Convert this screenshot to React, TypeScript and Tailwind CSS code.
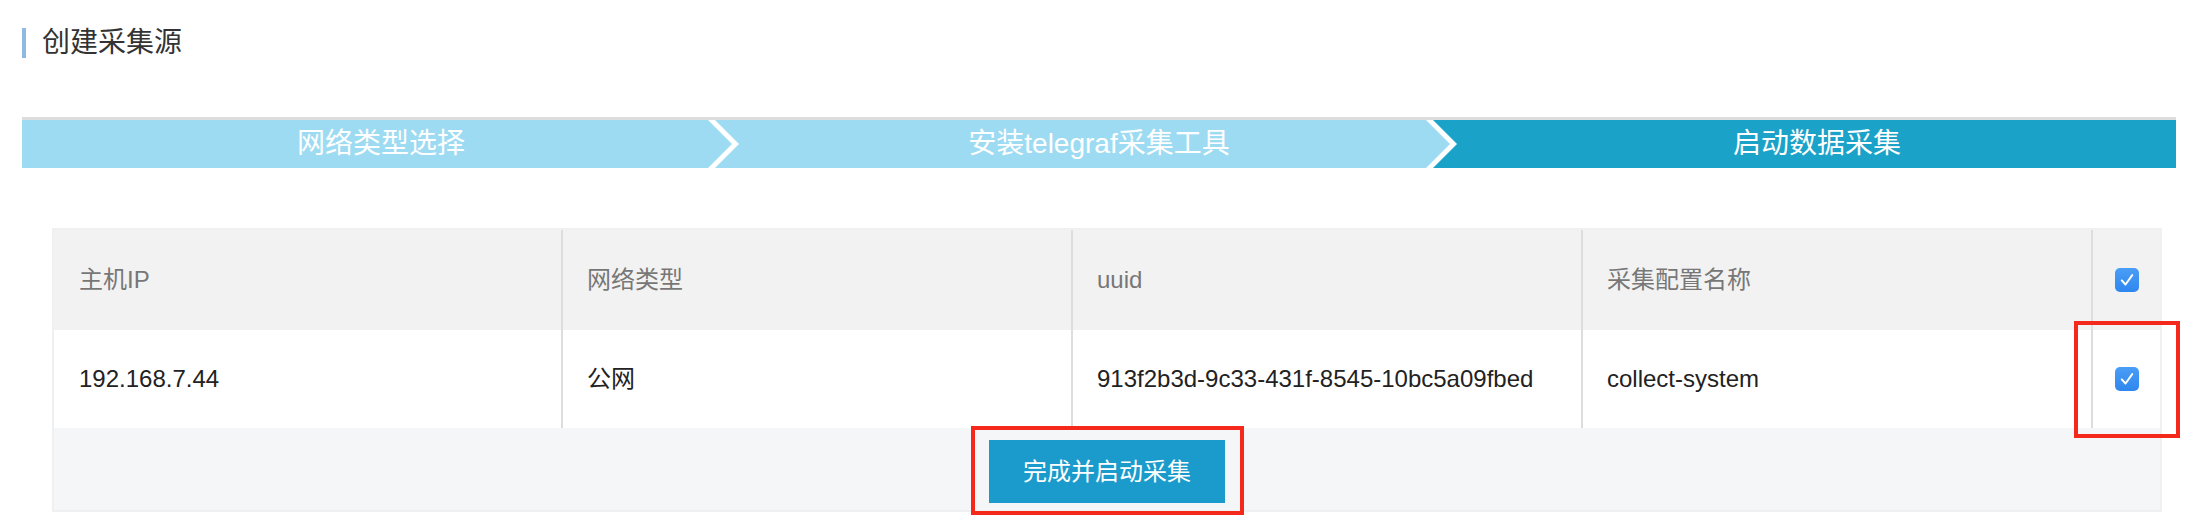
import React from 'react';

const LIGHT = '#9ddbf2';
const DARK = '#1aa2c8';

const steps = [
    { label: '网络类型选择', color: LIGHT },
    { label: '安装telegraf采集工具', color: LIGHT },
    { label: '启动数据采集', color: DARK },
];

function Chevron({ prev, next }: { prev: string; next: string }) {
    return (
        <svg
            className="absolute top-0 left-[-32px] h-[48px] w-[32px]"
            viewBox="0 0 32 48"
            preserveAspectRatio="none">
            <rect width="32" height="48" fill={next} />
            <polygon points="0,0 7,0 31,24 7,48 0,48" fill="#ffffff" />
            <polygon points="0,0 24,24 0,48" fill={prev} />
        </svg>
    );
}

function Checkbox() {
    return (
        <div className="flex h-[24px] w-[24px] items-center justify-center rounded-[5px] bg-gradient-to-b from-[#4a9ef6] to-[#2f86ee]">
            <svg viewBox="0 0 24 24" className="h-[18px] w-[18px]">
                <path
                    d="M5 12.5 L10 18 L19 5.5"
                    fill="none"
                    stroke="#ffffff"
                    strokeWidth="2.6"
                    strokeLinecap="round"
                    strokeLinejoin="round"
                />
            </svg>
        </div>
    );
}

export default function App() {
    const font = "font-['Liberation_Sans','Noto_Sans_CJK_SC',sans-serif]";
    const headers = ['主机IP', '网络类型', 'uuid', '采集配置名称'];
    const row = ['192.168.7.44', '公网', '913f2b3d-9c33-431f-8545-10bc5a09fbed', 'collect-system'];

    return (
        <main className={`min-h-[528px] bg-white pt-[28px] pr-[18px] pl-[22px] ${font}`}>
            {/* title */}
            <div className="flex h-[30px] items-center gap-4">
                <div className="h-[30px] w-[4px] bg-[#8fb9e2]" />
                <h1 className="text-[28px] leading-[30px] text-[#333333]">创建采集源</h1>
            </div>

            {/* steps */}
            <div className="mt-[59px] flex border-t-[3px] border-[#dedede]">
                {steps.map((s, i) => (
                    <div
                        key={s.label}
                        className="relative flex h-[48px] flex-1 items-center justify-center text-[28px] text-white"
                        style={{ backgroundColor: s.color }}>
                        {i > 0 && <Chevron prev={steps[i - 1].color} next={s.color} />}
                        <span className="relative">{s.label}</span>
                    </div>
                ))}
            </div>

            {/* table */}
            <div className="mt-[60px] mr-[14px] ml-[30px] border-2 border-[#eff0f1] text-[24px]">
                <div className="grid grid-cols-[507px_510px_510px_510px_1fr]">
                    {headers.map((h, i) => (
                        <div
                            key={h}
                            className={`flex h-[100px] items-center bg-[#f2f2f2] text-[#777777] ${
                                i === 0 ? 'pl-[25px]' : 'border-l-2 border-[#dddddd] pl-6'
                            }`}>
                            {h}
                        </div>
                    ))}
                    <div className="flex h-[100px] items-center justify-center border-l-2 border-[#dddddd] bg-[#f2f2f2]">
                        <Checkbox />
                    </div>

                    {row.map((c, i) => (
                        <div
                            key={c}
                            className={`flex h-[98px] items-center bg-white text-[#222222] ${
                                i === 0 ? 'pl-[25px]' : 'border-l-2 border-[#dddddd] pl-6'
                            }`}>
                            {c}
                        </div>
                    ))}
                    <div className="relative flex h-[98px] items-center justify-center border-l-2 border-[#dddddd] bg-white">
                        <Checkbox />
                        <div className="absolute -top-[9px] -right-[20px] -bottom-[10px] -left-[19px] border-4 border-[#f5281c]" />
                    </div>
                </div>

                <div className="flex h-[82px] items-start justify-center bg-[#f5f6f7] pt-[12px]">
                    <span className="relative">
                        <button className="flex h-[63px] w-[236px] items-center justify-center bg-[#1a9bcb] text-[24px] text-white">
                            完成并启动采集
                        </button>
                        <span className="absolute -top-[14px] -right-[19px] -bottom-[12px] -left-[18px] border-4 border-[#f5281c]" />
                    </span>
                </div>
            </div>
        </main>
    );
}
